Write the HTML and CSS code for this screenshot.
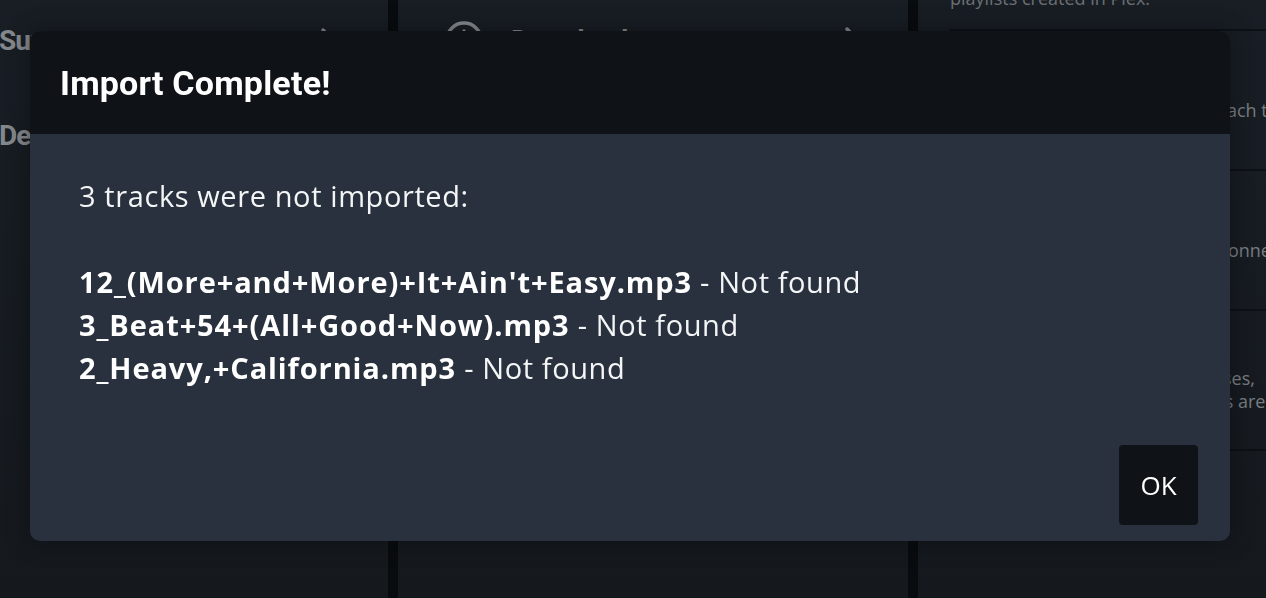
FILE: index.html
```html
<!DOCTYPE html>
<html lang="en">
<head>
<meta charset="utf-8">
<title>Import Complete</title>
<link rel="stylesheet" href="styles.css">
</head>
<body>
<div class="page">
  <section class="col col-nav">
    <div class="nav-row">
      <span class="nav-label">Support</span>
      <svg class="chev" viewBox="0 0 16 28" width="16" height="28"><path d="M3 3 L13 14 L3 25" fill="none" stroke="currentColor" stroke-width="3.5" stroke-linecap="round" stroke-linejoin="round"/></svg>
    </div>
    <div class="nav-row">
      <span class="nav-label">Debug</span>
    </div>
  </section>
  <section class="col col-mid">
    <div class="nav-row mid-row">
      <svg class="dl-icon" viewBox="0 0 40 40" width="40" height="40"><circle cx="20" cy="20" r="17" fill="none" stroke="currentColor" stroke-width="3.5"/><path d="M20 11 V27 M13 21 L20 28 L27 21" fill="none" stroke="currentColor" stroke-width="3.5" stroke-linecap="round" stroke-linejoin="round"/></svg>
      <span class="nav-label grow">Download</span>
      <svg class="chev" viewBox="0 0 16 28" width="16" height="28"><path d="M3 3 L13 14 L3 25" fill="none" stroke="currentColor" stroke-width="3.5" stroke-linecap="round" stroke-linejoin="round"/></svg>
    </div>
  </section>
  <section class="col col-settings">
    <div class="set-top">playlists created in Plex.</div>
    <div class="set-item">
      <h3 class="set-title">Upload Artwork</h3>
      <p class="set-desc">Upload the album's artwork for each track<br>to your Plex server.</p>
    </div>
    <div class="set-item">
      <h3 class="set-title">Upload Iframes</h3>
      <p class="set-desc">Upload all iframes to Plex when connected<br>and up to date.</p>
    </div>
    <div class="set-item">
      <h3 class="set-title">Sync databases</h3>
      <p class="set-desc">Synchronises all the local databases,<br>making sure that all of its playlists are<br>kept up to date.</p>
    </div>
    <div class="set-rest"></div>
  </section>
</div>

<div class="backdrop"></div>

<div class="modal" role="dialog" aria-labelledby="modal-title">
  <header class="modal-header">
    <h2 class="modal-title" id="modal-title">Import Complete!</h2>
  </header>
  <div class="modal-body">
    <p class="report">3 tracks were not imported:<br><br><b>12_(More+and+More)+It+Ain't+Easy.mp3</b> - Not found<br><b>3_Beat+54+(All+Good+Now).mp3</b> - Not found<br><b>2_Heavy,+California.mp3</b> - Not found</p>
    <div class="modal-footer">
      <button class="btn-ok" type="button">OK</button>
    </div>
  </div>
</div>
</body>
</html>
```

FILE: styles.css
```css
* { box-sizing: border-box; }

html, body {
  margin: 0;
  height: 100%;
  overflow: hidden;
}

body {
  background: #0a0c0f;
  font-family: "Open Sans", "Noto Sans", sans-serif;
  color: #fff;
}

.page {
  display: flex;
  gap: 10px;
  height: 598px;
  background: #0a0c0f;
}

.col {
  background: linear-gradient(180deg, #1c2129 0%, #181c22 100%);
  overflow: hidden;
}

.col-nav { width: 388px; padding-top: 5px; }
.col-mid { width: 510px; padding: 20px 48px 0 46px; }
.col-settings { flex: 1; min-width: 0; padding-left: 32px; display: flex; flex-direction: column; }

.nav-row {
  display: flex;
  align-items: center;
  height: 95px;
  margin-top: -12px;
  padding-right: 52px;
  color: #9a9da1;
}

.nav-row + .nav-row { margin-top: 0; }

.nav-label {
  font-family: "Roboto", sans-serif;
  font-weight: 700;
  font-size: 28px;
  flex: 1;
  margin-left: -1px;
  letter-spacing: -1px;
}

.mid-row { padding-right: 0; height: 80px; margin-top: -20px; }
.dl-icon { margin-right: 28px; color: #9a9da1; }
.chev { color: #9a9da1; }

.set-top {
  font-size: 18px;
  color: #7d8187;
  line-height: 22px;
  margin-top: -13px;
  padding-bottom: 20px;
  border-bottom: 2px solid #0f1217;
  white-space: nowrap;
}

.set-item {
  height: 140px;
  border-bottom: 2px solid #0f1217;
  display: flex;
  flex-direction: column;
  justify-content: center;
}

.set-title {
  margin: 0 0 8px;
  font-size: 26px;
  font-weight: 400;
  color: #7d8187;
  white-space: nowrap;
}

.set-desc {
  margin: 0;
  font-size: 18px;
  line-height: 23.5px;
  color: #8c9096;
  white-space: nowrap;
}

.backdrop {
  position: fixed;
  inset: 0;
  background: rgba(10, 12, 15, 0.15);
}

.modal {
  position: fixed;
  left: 30px;
  top: 31px;
  width: 1200px;
  border-radius: 10px;
  overflow: hidden;
  background: #28313d;
  box-shadow: 0 0 24px rgba(0, 0, 0, 0.35);
}

.modal-header {
  height: 103px;
  background: #0f1216;
  display: flex;
  align-items: center;
  padding: 0 30px;
}

.modal-title {
  margin: 0;
  font-family: "Roboto", sans-serif;
  font-weight: 700;
  font-size: 34px;
  color: #fff;
  letter-spacing: 0.2px;
}

.modal-body {
  padding: 40px 32px 16px 49px;
}

.report {
  margin: 0;
  font-size: 29px;
  line-height: 43px;
  letter-spacing: 0.6px;
  color: #f4f5f6;
}

.report b { font-weight: 700; color: #fff; letter-spacing: 0.9px; }

.modal-footer {
  display: flex;
  justify-content: flex-end;
  margin-top: 56px;
}

.btn-ok {
  width: 79px;
  height: 80px;
  border: 0;
  border-radius: 4px;
  background: #0f1216;
  color: #fff;
  font-family: "Open Sans", "Noto Sans", sans-serif;
  font-size: 26px;
  padding: 0;
}
```
